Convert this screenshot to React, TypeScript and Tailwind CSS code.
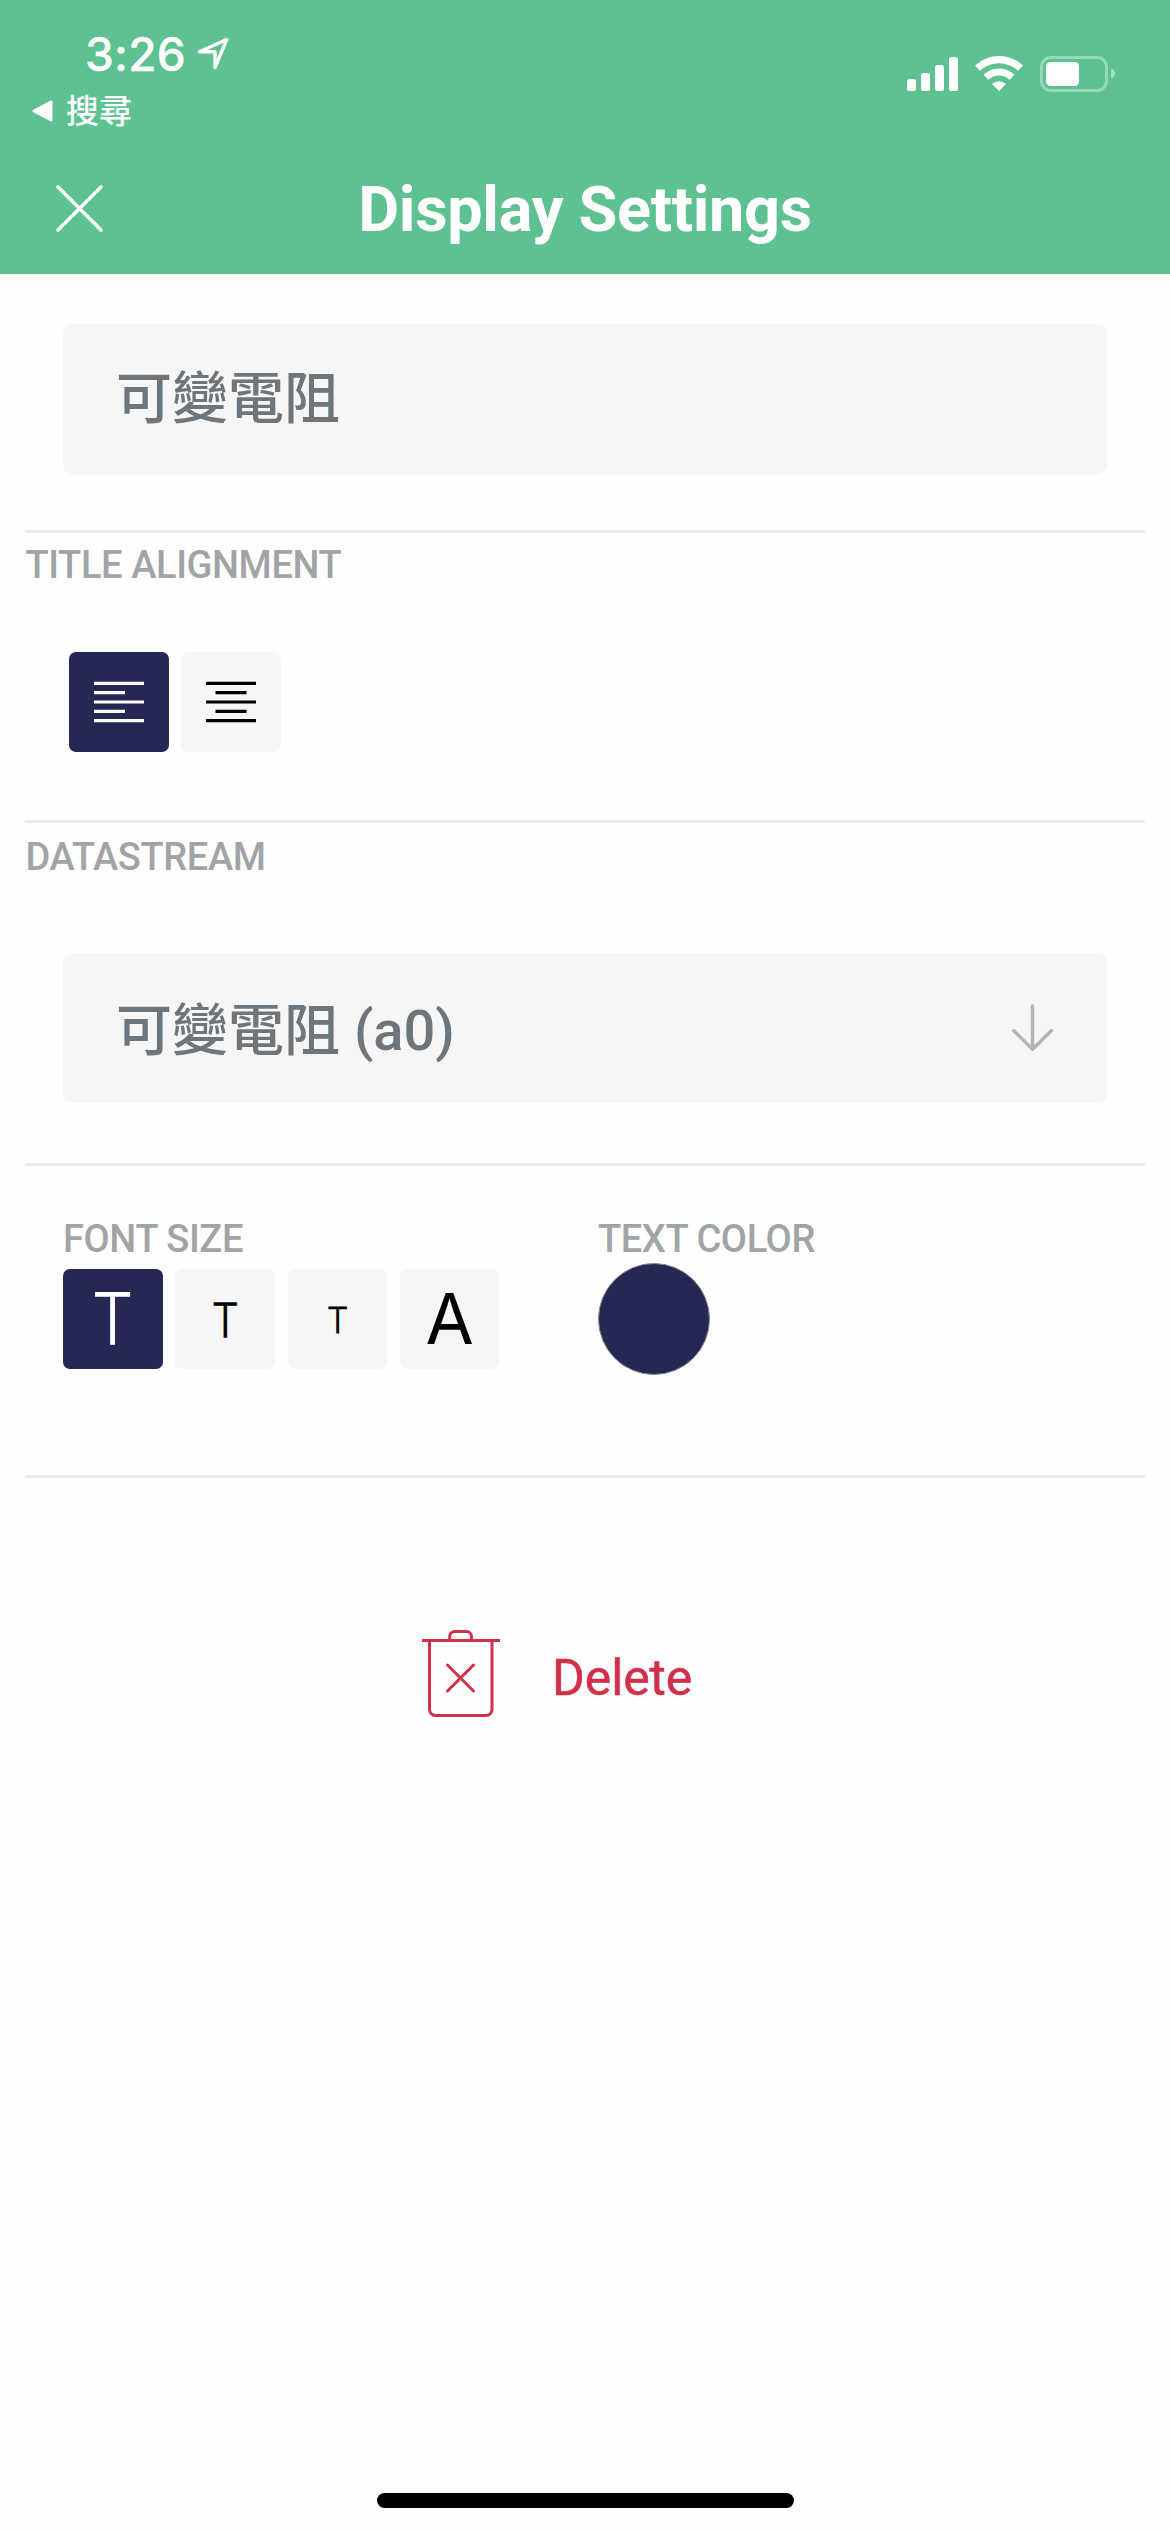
import type { ReactNode } from 'react';

function StatusBar() {
  return (
    <div className="flex h-[142px] items-start justify-between text-white">
      <div className="pl-[31px] pt-[30px]">
        <div className="flex h-12 items-center pl-[54px]">
          <span className="font-[Inter,sans-serif] text-[46px] font-medium leading-[47px] tracking-[0.2px] [-webkit-text-stroke:0.4px_currentColor]">3:26</span>
          <svg className="ml-[10px] mt-[-3px]" width="34" height="34" viewBox="0 0 34 34" fill="none">
            <path d="M3.5 15.700 30.700 3.500 19 31.500V15.700Z" stroke="white" strokeWidth="3.400" strokeLinejoin="round" />
          </svg>
        </div>
        <div className="flex h-[60px] items-center">
          <svg className="mt-[6px]" width="24" height="22" viewBox="0 0 24 22" fill="white">
            <path d="M20 2v18L3 11Z" stroke="white" strokeWidth="3" strokeLinejoin="round" />
          </svg>
          <span className="ml-[11px] pt-[3px] font-['Noto_Sans_CJK_TC',sans-serif] text-[33px] font-medium leading-[57px]">搜尋</span>
        </div>
      </div>
      <div className="flex items-center pr-[55px] pt-[54px]">
        <svg width="51" height="36" viewBox="0 0 51 36" fill="white">
          <rect x="0" y="24" width="9" height="12" rx="2.6" />
          <rect x="14" y="18" width="9" height="18" rx="2.6" />
          <rect x="28" y="10" width="9" height="26" rx="2.6" />
          <rect x="42" y="2" width="9" height="34" rx="2.6" />
        </svg>
        <svg className="ml-[17px]" width="48" height="36" viewBox="0 0 48 36" fill="none">
          <path d="M2.5 13.2a31 31 0 0 1 43 0" stroke="white" strokeWidth="7.2" />
          <path d="M11 22.3a18.8 18.8 0 0 1 26 0" stroke="white" strokeWidth="7" />
          <path d="M24 36 17 29a10.3 10.3 0 0 1 14 0Z" fill="white" />
        </svg>
        <svg className="ml-[17px]" width="75" height="38" viewBox="0 0 75 38" fill="none">
          <rect x="1.5" y="3.5" width="65" height="33" rx="9.5" stroke="white" strokeOpacity="0.36" strokeWidth="3" />
          <rect x="6" y="8" width="33" height="24" rx="4.5" fill="white" />
          <path d="M71 14.5c2.6.8 4 2.800 4 5s-1.400 4.200-4 5Z" fill="white" fillOpacity="0.45" />
        </svg>
      </div>
    </div>
  );
}

function Divider({ cool = false }: { cool?: boolean }) {
  return <div className={`mx-[25px] h-[3px] ${cool ? 'bg-[#e9ebee]' : 'bg-[#ebebeb]'}`} />;
}

function Label({ children }: { children: ReactNode }) {
  return (
    <div className="text-[38px] font-medium leading-[46px] tracking-[-0.38px] text-[#a0a4a6]">{children}</div>
  );
}

function Tile({ active = false, children }: { active?: boolean; children: ReactNode }) {
  return (
    <button
      className={`flex h-[99.500px] w-[99.500px] items-center justify-center rounded-[7px] ${
        active ? 'bg-[#262854] text-white' : 'bg-[#f6f6f6] text-black'
      }`}
    >
      {children}
    </button>
  );
}

function AlignIcon({ offset }: { offset: number }) {
  return (
    <svg width="50" height="42" viewBox="0 0 50 42" stroke="currentColor" strokeWidth="3.2">
      <path d="M0 2.300H50M0 21H50M0 39.700H50" />
      <path d={`M${offset} 11.700h31M${offset} 30.400h31`} />
    </svg>
  );
}

export default function App() {
  return (
    <div className="flex h-[2532px] w-[1170px] flex-col bg-[#fefefe] font-[Roboto,'Noto_Sans_CJK_TC',sans-serif]">
      <header className="h-[274px] bg-[#5ec192]">
        <StatusBar />
        <div className="grid h-[132px] grid-cols-[160px_1fr_160px] items-center text-white">
          <svg className="ml-[55px]" width="49" height="49" viewBox="0 0 49 49" fill="none">
            <path d="M3 3 46 46M46 3 3 46" stroke="white" strokeWidth="3.600" strokeLinecap="round" />
          </svg>
          <h1 className="pt-1 text-center text-[63px] font-bold leading-[128px] tracking-[-0.3px]">Display Settings</h1>
        </div>
      </header>

      <section className="h-[256px] px-[63px] pt-[50px]">
        <div className="flex h-[150px] items-center rounded-[9px] bg-[#f6f6f6] px-[53px] text-[56px] font-medium leading-[64px] text-[#6e757b]">
          可變電阻
        </div>
      </section>

      <Divider cool />
      <section className="h-[287px] pt-[9px]">
        <div className="pl-[25.500px]"><Label>TITLE ALIGNMENT</Label></div>
        <div className="mt-[64px] flex gap-[12.500px] pl-[69px]">
          <Tile active><AlignIcon offset={0} /></Tile>
          <Tile><AlignIcon offset={9.5} /></Tile>
        </div>
      </section>

      <Divider />
      <section className="h-[340px] pt-[11px]">
        <div className="pl-[25.500px]"><Label>DATASTREAM</Label></div>
        <div className="mx-[63px] mt-[73px] flex h-[150px] items-center justify-between rounded-[9px] bg-[#f6f6f6] pl-[53px] pr-[52px] text-[#6e757b]">
          <span className="pt-[5px] text-[56px] font-medium leading-[64px]">可變電阻 (a0)</span>
          <svg width="45" height="50" viewBox="0 0 45 50" fill="none">
            <path d="M22.500 3V46M3.700 27.700 22.500 46.300 41.300 27.700" stroke="#b2b5b7" strokeWidth="3.400" strokeLinecap="round" strokeLinejoin="round" />
          </svg>
        </div>
      </section>

      <Divider />
      <section className="flex h-[309px] pl-[63px] pt-[50px]">
        <div className="w-[535px]">
          <Label>FONT SIZE</Label>
          <div className="mt-[7px] flex gap-[12.800px] font-['Open_Sans',sans-serif]">
            <Tile active>
              <span className="origin-center scale-x-[0.92] pb-1 text-[71px] font-light leading-[90px] [-webkit-text-stroke:1.6px_currentColor]">T</span>
            </Tile>
            <Tile>
              <span className="origin-center scale-x-[0.92] text-[47px] font-light leading-[90px] [-webkit-text-stroke:1.3px_currentColor]">T</span>
            </Tile>
            <Tile>
              <span className="origin-center scale-x-[0.92] text-[37px] font-light leading-[90px] [-webkit-text-stroke:1.1px_currentColor]">T</span>
            </Tile>
            <Tile><span className="font-[Inter,sans-serif] text-[70px] leading-[90px]">A</span></Tile>
          </div>
        </div>
        <div>
          <Label>TEXT COLOR</Label>
          <div className="mt-px size-28 rounded-full border border-[#8a8a92] bg-[#262854]" />
        </div>
      </section>

      <Divider />
      <button className="mt-[150px] flex h-[92px] items-center pl-[420px] text-[#d03049]">
        <svg width="82" height="92" viewBox="0 0 82 92" fill="none" stroke="currentColor" strokeWidth="3">
          <path d="M2 12.600H80M29.700 12V8.500a5 5 0 0 1 5-5H46.500a5 5 0 0 1 5 5V12" />
          <path d="M9.500 12.600V81.500a6 6 0 0 0 6 6H66a6 6 0 0 0 6-6V12.600" />
          <path d="M27.500 37 53.500 63M53.500 37 27.500 63" strokeLinecap="round" />
        </svg>
        <span className="ml-[50px] pt-[7px] text-[50px] leading-[60px] tracking-[-0.1px] [-webkit-text-stroke:0.5px_currentColor]">Delete</span>
      </button>

      <div className="mx-auto mb-6 mt-auto h-[15px] w-[417px] rounded-full bg-black" />
    </div>
  );
}
